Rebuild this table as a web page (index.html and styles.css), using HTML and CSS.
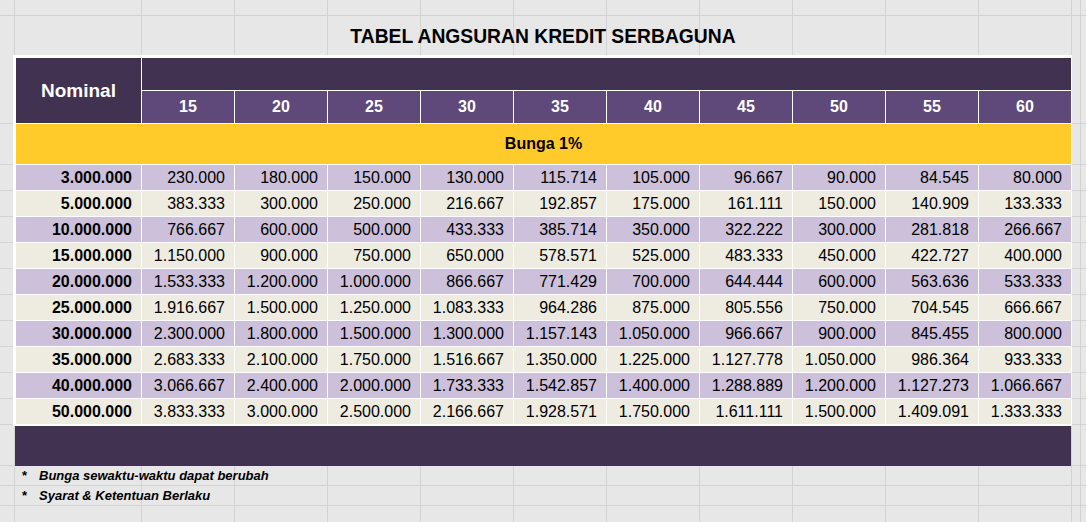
FILE: index.html
```html
<!DOCTYPE html>
<html lang="id">
<head>
<meta charset="utf-8">
<title>Tabel Angsuran Kredit Serbaguna</title>
<link rel="stylesheet" href="styles.css">
</head>
<body>
<div class="page">
  <h1 class="title">TABEL ANGSURAN KREDIT SERBAGUNA</h1>
  <div class="sheet">
    <div class="cell nominal">Nominal</div>
    <div class="cell band"></div>
    <div class="cell term">15</div>
    <div class="cell term">20</div>
    <div class="cell term">25</div>
    <div class="cell term">30</div>
    <div class="cell term">35</div>
    <div class="cell term">40</div>
    <div class="cell term">45</div>
    <div class="cell term">50</div>
    <div class="cell term">55</div>
    <div class="cell term">60</div>
    <div class="cell rate">Bunga 1%</div>

    <div class="cell amt odd">3.000.000</div><div class="cell val odd">230.000</div><div class="cell val odd">180.000</div><div class="cell val odd">150.000</div><div class="cell val odd">130.000</div><div class="cell val odd">115.714</div><div class="cell val odd">105.000</div><div class="cell val odd">96.667</div><div class="cell val odd">90.000</div><div class="cell val odd">84.545</div><div class="cell val odd">80.000</div>

    <div class="cell amt even">5.000.000</div><div class="cell val even">383.333</div><div class="cell val even">300.000</div><div class="cell val even">250.000</div><div class="cell val even">216.667</div><div class="cell val even">192.857</div><div class="cell val even">175.000</div><div class="cell val even">161.111</div><div class="cell val even">150.000</div><div class="cell val even">140.909</div><div class="cell val even">133.333</div>

    <div class="cell amt odd">10.000.000</div><div class="cell val odd">766.667</div><div class="cell val odd">600.000</div><div class="cell val odd">500.000</div><div class="cell val odd">433.333</div><div class="cell val odd">385.714</div><div class="cell val odd">350.000</div><div class="cell val odd">322.222</div><div class="cell val odd">300.000</div><div class="cell val odd">281.818</div><div class="cell val odd">266.667</div>

    <div class="cell amt even">15.000.000</div><div class="cell val even">1.150.000</div><div class="cell val even">900.000</div><div class="cell val even">750.000</div><div class="cell val even">650.000</div><div class="cell val even">578.571</div><div class="cell val even">525.000</div><div class="cell val even">483.333</div><div class="cell val even">450.000</div><div class="cell val even">422.727</div><div class="cell val even">400.000</div>

    <div class="cell amt odd">20.000.000</div><div class="cell val odd">1.533.333</div><div class="cell val odd">1.200.000</div><div class="cell val odd">1.000.000</div><div class="cell val odd">866.667</div><div class="cell val odd">771.429</div><div class="cell val odd">700.000</div><div class="cell val odd">644.444</div><div class="cell val odd">600.000</div><div class="cell val odd">563.636</div><div class="cell val odd">533.333</div>

    <div class="cell amt even">25.000.000</div><div class="cell val even">1.916.667</div><div class="cell val even">1.500.000</div><div class="cell val even">1.250.000</div><div class="cell val even">1.083.333</div><div class="cell val even">964.286</div><div class="cell val even">875.000</div><div class="cell val even">805.556</div><div class="cell val even">750.000</div><div class="cell val even">704.545</div><div class="cell val even">666.667</div>

    <div class="cell amt odd">30.000.000</div><div class="cell val odd">2.300.000</div><div class="cell val odd">1.800.000</div><div class="cell val odd">1.500.000</div><div class="cell val odd">1.300.000</div><div class="cell val odd">1.157.143</div><div class="cell val odd">1.050.000</div><div class="cell val odd">966.667</div><div class="cell val odd">900.000</div><div class="cell val odd">845.455</div><div class="cell val odd">800.000</div>

    <div class="cell amt even">35.000.000</div><div class="cell val even">2.683.333</div><div class="cell val even">2.100.000</div><div class="cell val even">1.750.000</div><div class="cell val even">1.516.667</div><div class="cell val even">1.350.000</div><div class="cell val even">1.225.000</div><div class="cell val even">1.127.778</div><div class="cell val even">1.050.000</div><div class="cell val even">986.364</div><div class="cell val even">933.333</div>

    <div class="cell amt odd">40.000.000</div><div class="cell val odd">3.066.667</div><div class="cell val odd">2.400.000</div><div class="cell val odd">2.000.000</div><div class="cell val odd">1.733.333</div><div class="cell val odd">1.542.857</div><div class="cell val odd">1.400.000</div><div class="cell val odd">1.288.889</div><div class="cell val odd">1.200.000</div><div class="cell val odd">1.127.273</div><div class="cell val odd">1.066.667</div>

    <div class="cell amt even">50.000.000</div><div class="cell val even">3.833.333</div><div class="cell val even">3.000.000</div><div class="cell val even">2.500.000</div><div class="cell val even">2.166.667</div><div class="cell val even">1.928.571</div><div class="cell val even">1.750.000</div><div class="cell val even">1.611.111</div><div class="cell val even">1.500.000</div><div class="cell val even">1.409.091</div><div class="cell val even">1.333.333</div>
  </div>
  <div class="footer-bar"></div>
  <ul class="notes">
    <li class="note"><span class="star">*</span><span>Bunga sewaktu-waktu dapat berubah</span></li>
    <li class="note"><span class="star">*</span><span>Syarat &amp; Ketentuan Berlaku</span></li>
  </ul>
</div>
</body>
</html>
```

FILE: styles.css
```css
html, body {
  margin: 0;
  padding: 0;
}

body {
  font-family: "Liberation Sans", Arial, sans-serif;
  overflow: hidden;
}

.page {
  width: 1086px;
  height: 522px;
  background-color: #e7e7e7;
  background-image:
    linear-gradient(#d3d3d3, #d3d3d3),
    repeating-linear-gradient(to right, #d3d3d3 0 1px, transparent 1px 93px),
    linear-gradient(#d3d3d3, #d3d3d3),
    linear-gradient(#d3d3d3, #d3d3d3),
    linear-gradient(#d3d3d3, #d3d3d3),
    repeating-linear-gradient(to bottom, #d3d3d3 0 1px, transparent 1px 26px),
    linear-gradient(#d3d3d3, #d3d3d3),
    linear-gradient(#d3d3d3, #d3d3d3),
    linear-gradient(#d3d3d3, #d3d3d3);
  background-size:
    1px 100%,
    931px 100%,
    1px 100%,
    100% 1px,
    100% 1px,
    100% 261px,
    100% 1px,
    100% 1px,
    100% 1px;
  background-position:
    14px 0,
    141px 0,
    1080px 0,
    0 15px,
    0 123px,
    0 164px,
    0 465px,
    0 485px,
    0 505px;
  background-repeat: no-repeat;
}

.title {
  margin: 0;
  height: 55px;
  box-sizing: border-box;
  padding-top: 26px;
  font-size: 19.3px;
  line-height: 22px;
  font-weight: bold;
  text-align: center;
  color: #000;
}

.sheet {
  display: grid;
  grid-template-columns: 125px repeat(10, 92px);
  grid-template-rows: 32px 32px 40px repeat(10, 25px);
  gap: 1px;
  width: max-content;
  margin-left: 13px;
  padding: 3px 1px 2px 3px;
  background: #ffffff;
}

.cell {
  font-size: 16px;
  line-height: 25px;
  color: #000;
  white-space: nowrap;
}

.nominal {
  grid-row: 1 / 3;
  background: #413252;
  color: #fff;
  font-size: 19px;
  font-weight: bold;
  display: flex;
  align-items: center;
  justify-content: center;
}

.band {
  grid-column: 2 / 12;
  background: #413252;
}

.term {
  background: #5f497a;
  color: #fff;
  font-weight: bold;
  text-align: center;
  line-height: 32px;
}

.rate {
  grid-column: 1 / 12;
  background: #ffcb2b;
  font-weight: bold;
  text-align: center;
  line-height: 40px;
}

.amt {
  font-weight: bold;
  text-align: right;
  padding-right: 9px;
}

.val {
  text-align: right;
  padding-right: 9px;
}

.odd {
  background: #ccc0da;
}

.even {
  background: #eeece1;
}

.footer-bar {
  margin-left: 15px;
  width: 1056px;
  height: 40px;
  background: #413252;
}

.notes {
  list-style: none;
  margin: 0;
  padding: 0 0 0 22px;
}

.note {
  display: flex;
  height: 20px;
  line-height: 20px;
  font-size: 13px;
  font-weight: bold;
  font-style: italic;
  color: #000;
}

.star {
  width: 17px;
  font-style: normal;
}
```
